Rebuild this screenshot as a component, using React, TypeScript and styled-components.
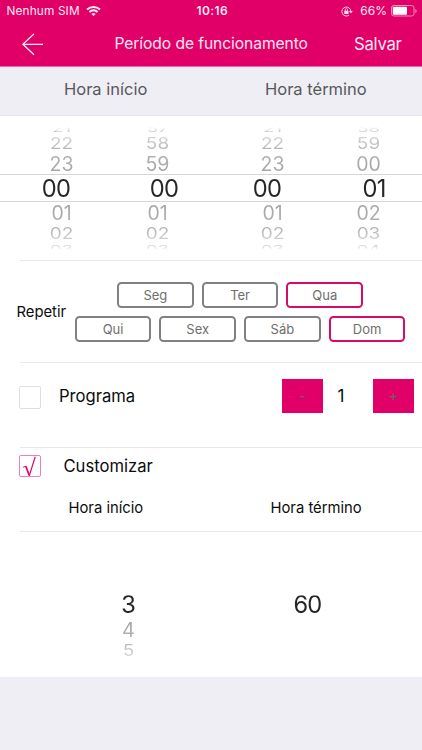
import React from "react";
import styled, { createGlobalStyle } from "styled-components";

const PINK = "#e10067";
const PANEL = "#efeef5";

const GlobalStyle = createGlobalStyle`
  * { box-sizing: border-box; }
  html, body { margin: 0; background: ${PANEL}; }
  body { font-family: Inter, "Liberation Sans", sans-serif; color: #0c0c0c; overflow: hidden; }
`;

const Screen = styled.main`
  width: 422px;
  height: 750px;
  display: flex;
  flex-direction: column;
  background: ${PANEL};
`;

const Label = styled.span<{ $size: number; $track?: number; $color?: string; $weight?: number }>`
  display: block;
  white-space: nowrap;
  line-height: 22px;
  font-size: ${(p) => p.$size}px;
  letter-spacing: ${(p) => p.$track ?? 0}px;
  color: ${(p) => p.$color ?? "inherit"};
  font-weight: ${(p) => p.$weight ?? 400};
`;

const Top = styled.header`
  height: 67px;
  flex: none;
  background: ${PINK};
  color: #ffe6f3;
  border-bottom: 1px solid #ee6ba8;
`;

const StatusBar = styled.div`
  height: 22px;
  display: grid;
  grid-template-columns: 1fr auto 1fr;
  align-items: center;
  padding: 0 4px 0 6.5px;
`;

const StatusGroup = styled.div<{ $end?: boolean }>`
  display: flex;
  align-items: center;
  gap: ${(p) => (p.$end ? 4 : 6)}px;
  justify-content: ${(p) => (p.$end ? "flex-end" : "flex-start")};
`;

const NavBar = styled.nav`
  height: 44px;
  display: grid;
  grid-template-columns: 92.5px 1fr 68px;
  align-items: center;
  padding: 0 0 1px 22px;
`;

const BackButton = styled.button`
  padding: 0;
  border: 0;
  background: none;
  display: flex;
`;

const Columns = styled.div`
  flex: none;
  height: 48px;
  display: grid;
  grid-template-columns: 201px 1fr;
  align-items: center;
  padding: 0 0 4px 64px;
`;

const Card = styled.section`
  flex: none;
  height: 562px;
  background: #fff;
  border-top: 1px solid #e6e5ec;
  display: flex;
  flex-direction: column;
`;

const Picker = styled.div`
  flex: none;
  height: 144px;
  padding-top: 8px;
`;

const PickerRow = styled.div<{ $height: number; $selected?: boolean }>`
  height: ${(p) => p.$height}px;
  display: grid;
  align-items: center;
  align-content: center;
  padding-left: ${(p) => (p.$selected ? 32 : 37.5)}px;
  grid-template-columns: ${(p) => (p.$selected ? "108px 103px 107px 48px" : "96px 115px 96px 48px")};
  border: solid #d6d6d6;
  border-width: ${(p) => (p.$selected ? "1px 0" : "0")};
`;

const Digit = styled.span<{ $size: number; $squash?: number; $fill: string; $track?: number; $line?: number; $shift?: number }>`
  width: 48px;
  text-align: center;
  line-height: ${(p) => p.$line ?? 20}px;
  font-size: ${(p) => p.$size}px;
  letter-spacing: ${(p) => p.$track ?? 0}px;
  transform: translateY(${(p) => p.$shift ?? 0.4}px) scaleY(${(p) => p.$squash ?? 1});
  color: transparent;
  background: linear-gradient(${(p) => p.$fill});
  background-clip: text;
`;

const Divider = styled.hr`
  flex: none;
  height: 1px;
  margin: 0 0 0 20px;
  border: 0;
  background: #e9e9e9;
`;

const Repeat = styled.div`
  flex: none;
  height: 101px;
  display: flex;
  align-items: center;
  padding: 1px 0 0 16.5px;
`;

const Days = styled.div`
  flex: 1;
  display: flex;
  flex-direction: column;
  align-items: center;
  gap: 8px;
  padding-right: 8px;
`;

const DayRow = styled.div`
  display: flex;
  gap: 8px;
`;

const Day = styled.button<{ $on?: boolean }>`
  width: 76.7px;
  height: 26px;
  padding: 0;
  display: flex;
  align-items: center;
  justify-content: center;
  font-family: inherit;
  background: #fff;
  border: 2px solid ${(p) => (p.$on ? "#d60b69" : "#818181")};
  border-radius: 4.5px;
`;

const ProgramRow = styled.div`
  flex: none;
  height: 84px;
  display: flex;
  align-items: flex-start;
  padding: 16px 8px 0 19px;
`;

const ProgramName = styled.div`
  padding-top: 6px;
`;

const CustomRow = styled.div`
  flex: none;
  height: 37px;
  display: flex;
  align-items: flex-start;
  padding: 7px 0 0 19px;
`;

const Check = styled.span<{ $on?: boolean; $top?: number }>`
  width: 22px;
  height: ${(p) => (p.$on ? 22 : 23)}px;
  margin: ${(p) => p.$top ?? 0}px ${(p) => (p.$on ? 22.5 : 18)}px 0 0;
  border: 1px solid ${(p) => (p.$on ? "#f080b0" : "#dedede")};
  border-radius: 2px;
  display: flex;
`;

const Stepper = styled.div`
  margin-left: auto;
  display: grid;
  grid-template-columns: 41px 36px 14px 41px;
  align-items: center;
  justify-items: center;
`;

const StepButton = styled.button`
  width: 41px;
  height: 34px;
  padding: 0;
  border: 0;
  background: ${PINK};
  display: flex;
  align-items: center;
  justify-content: center;
  font-family: inherit;
  &:last-child { grid-column: 4; }
`;

const RangeHead = styled.div`
  flex: none;
  height: 46px;
  display: grid;
  grid-template-columns: 202px 1fr;
  padding: 12px 0 0 68.5px;
`;

const RangePicker = styled.div`
  flex: none;
  padding-top: 59px;
  display: grid;
  grid-template-columns: 179px 48px;
  grid-template-rows: 28px 22px 20px;
  align-items: center;
  padding-left: 104.5px;
`;

const Wifi = () => (
  <svg width="15" height="12" viewBox="0 0 15 12" fill="none" stroke="#ffeaf5" strokeWidth="2">
    <path d="M1 4.5C4.7 1.1 10.3 1.1 14 4.5" />
    <path d="M3.4 7C5.8 4.8 9.2 4.8 11.6 7" />
    <path d="M7.5 11 5.4 8.9Q7.5 7.3 9.6 8.9Z" fill="#ffeaf5" stroke="none" />
  </svg>
);

const RotationLock = () => (
  <svg width="12" height="11" viewBox="0 0 12 11" fill="none" stroke="#ffd9eb">
    <path d="M8 9.2A4.5 4.5 0 1 1 9.9 5.5" />
    <path d="M8 5h3.8L9.9 7.6Z" fill="#ffd9eb" stroke="none" />
    <rect x="3.3" y="4.8" width="4.2" height="3.2" fill="#ffd9eb" stroke="none" />
    <path d="M4.2 5V3.8a1.2 1.2 0 0 1 2.4 0V5" strokeWidth=".8" />
  </svg>
);

const Battery = () => (
  <svg width="27" height="12" viewBox="0 0 27 12">
    <rect x=".5" y=".5" width="22.5" height="10.5" rx="2.4" fill="none" stroke="#f58cbd" />
    <rect x="1.8" y="1.8" width="14.2" height="7.9" rx="1" fill="#fff" />
    <path d="M24.3 4v4q1.4-.6 1.4-2t-1.4-2" fill="#f58cbd" />
  </svg>
);

type Tone = {
  height: number;
  size: number;
  squash?: number;
  fill: string;
  track?: number;
  line?: number;
  shift?: number;
  selected?: boolean;
};

const hours: { values: string[]; tone: Tone }[] = [
  { values: ["21", "57", "21", "58"], tone: { height: 9, size: 18.5, squash: 0.5, line: 14, shift: -0.4, fill: "#fff 25%, #c9c9c9 95%" } },
  { values: ["22", "58", "22", "59"], tone: { height: 20, size: 19, squash: 0.84, line: 18, shift: 1, fill: "#d5d5d5, #b0b0b0" } },
  { values: ["23", "59", "23", "00"], tone: { height: 21, size: 19.5, fill: "#b0b0b0, #a3a3a3" } },
  { values: ["00", "00", "00", "01"], tone: { height: 28, size: 23.7, shift: 1, fill: "#262626, #262626", track: -0.7, selected: true } },
  { values: ["01", "01", "01", "02"], tone: { height: 21, size: 19.5, fill: "#a3a3a3, #b0b0b0" } },
  { values: ["02", "02", "02", "03"], tone: { height: 20, size: 19, squash: 0.84, line: 18, shift: 1, fill: "#b0b0b0, #d5d5d5" } },
  { values: ["03", "03", "03", "04"], tone: { height: 9, size: 18.5, squash: 0.55, line: 14, shift: 0.8, fill: "#cfcfcf 5%, #fff 65%" } },
];

const DigitFor = ({ tone, children }: { tone: Tone; children: string }) => (
  <Digit $size={tone.size} $squash={tone.squash} $fill={tone.fill} $track={tone.track} $line={tone.line} $shift={tone.shift}>
    {children}
  </Digit>
);

const dayRows = [
  [["Seg", false], ["Ter", false], ["Qua", true]],
  [["Qui", false], ["Sex", false], ["Sáb", false], ["Dom", true]],
] as [string, boolean][][];

export default function App() {
  return (
    <>
      <GlobalStyle />
      <Screen>
        <Top>
          <StatusBar>
            <StatusGroup>
              <Label $size={11.8} $track={0.15}>Nenhum SIM</Label>
              <Wifi />
            </StatusGroup>
            <Label $size={12} $weight={600} $track={0.4}>10:16</Label>
            <StatusGroup $end>
              <RotationLock />
              <Label $size={12}>&nbsp;66%</Label>
              <Battery />
            </StatusGroup>
          </StatusBar>
          <NavBar>
            <BackButton aria-label="Voltar">
              <svg width="22" height="24" viewBox="0 0 22 24" fill="none" stroke="#fff0f7" strokeWidth="1.3">
                <path d="M12 1.9.9 12.3 12 22.7M1 12.3h20" />
              </svg>
            </BackButton>
            <Label $size={15.6} $track={-0.07}>Período de funcionamento</Label>
            <Label $size={16.7} $track={-0.25}>Salvar</Label>
          </NavBar>
        </Top>
        <Columns>
          <Label $size={16.5} $color="#58585b">Hora início</Label>
          <Label $size={16.5} $color="#58585b">Hora término</Label>
        </Columns>
        <Card>
          <Picker>
            {hours.map(({ values, tone }, row) => (
              <PickerRow key={row} $height={tone.height} $selected={tone.selected}>
                {values.map((value, col) => (
                  <DigitFor key={col} tone={tone}>{value}</DigitFor>
                ))}
              </PickerRow>
            ))}
          </Picker>
          <Divider />
          <Repeat>
            <Label $size={14.8}>Repetir</Label>
            <Days>
              {dayRows.map((days, row) => (
                <DayRow key={row}>
                  {days.map(([day, on]) => (
                    <Day key={day} $on={on}>
                      <Label $size={13} $color="#6e6e6e">{day}</Label>
                    </Day>
                  ))}
                </DayRow>
              ))}
            </Days>
          </Repeat>
          <Divider />
          <ProgramRow>
            <Check $top={7} />
            <ProgramName>
              <Label $size={16.6}>Programa</Label>
            </ProgramName>
            <Stepper>
              <StepButton aria-label="Diminuir"><Label $size={14} $weight={500} $color="#7d5a6c">-</Label></StepButton>
              <Label $size={17}>1</Label>
              <StepButton aria-label="Aumentar"><Label $size={14} $weight={500} $color="#7d5a6c">+</Label></StepButton>
            </Stepper>
          </ProgramRow>
          <Divider />
          <CustomRow>
            <Check $on>
              <svg width="20" height="20" viewBox="0 0 20 20" fill="none" stroke={PINK}>
                <path d="M3.2 11.3 6 10.2" strokeWidth="1" />
                <path d="M5.8 10.2 9.2 19.3" strokeWidth="1.7" />
                <path d="M9.2 20 15.2.8" strokeWidth="1.2" />
              </svg>
            </Check>
            <Label $size={16.6}>Customizar</Label>
          </CustomRow>
          <RangeHead>
            <Label $size={14.8}>Hora início</Label>
            <Label $size={14.8}>Hora término</Label>
          </RangeHead>
          <Divider />
          <RangePicker>
            <Digit $size={23.7} $fill="#262626, #262626">3</Digit>
            <Digit $size={23.7} $fill="#262626, #262626" $track={-0.7}>60</Digit>
            <Digit $size={20} $fill="#a3a3a3, #b4b4b4">4</Digit>
            <span />
            <Digit $size={19} $squash={0.8} $fill="#bbb, #ddd">5</Digit>
          </RangePicker>
        </Card>
      </Screen>
    </>
  );
}
